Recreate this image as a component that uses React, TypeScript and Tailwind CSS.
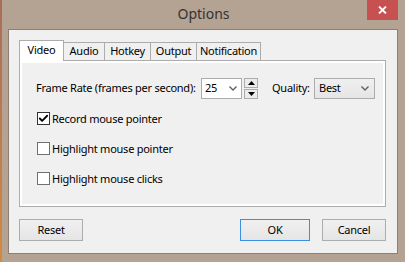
import { Check } from "lucide-react";

function Chevron() {
  return (
    <svg width="8" height="5" viewBox="0 0 8 5" fill="none">
      <path d="M0.5 0.5L4 4L7.5 0.5" stroke="#606060" strokeWidth="1.4" />
    </svg>
  );
}

function CheckRow({ label, checked }: { label: string; checked?: boolean }) {
  return (
    <div className="flex items-center h-[13px] ml-[1px]">
      <div
        className={`w-[13px] h-[13px] border bg-white flex items-center justify-center ${
          checked ? "border-[#333333]" : "border-[#707070]"
        }`}
      >
        {checked && <Check size={11} strokeWidth={4} className="text-black" />}
      </div>
      <span className="ml-[2px] leading-none">{label}</span>
    </div>
  );
}

export default function App() {
  const tabs = [
    { name: "Video", w: "w-[45px]" },
    { name: "Audio", w: "w-[41px]" },
    { name: "Hotkey", w: "w-[46px]" },
    { name: "Output", w: "w-[46px]" },
    { name: "Notification", w: "w-[64px]" },
  ];
  return (
    <div className="w-[405px] h-[262px] bg-[#b4a292] flex overflow-hidden font-['Noto_Sans',sans-serif] text-[11px] tracking-[-0.25px] text-black">
      {/* desktop edge */}
      <div className="w-[2px] h-full bg-gradient-to-b from-[#a86c5c] to-[#d38b3c]" />
      <div className="flex-1 flex flex-col relative">
        {/* title bar */}
        <div className="h-[29px] flex items-center justify-center pb-[2px] text-[14px] tracking-normal text-[#333333]">
          Options
        </div>
        <div className="absolute right-[7px] top-0 w-[31px] h-[20px] bg-[#c75050] flex items-center justify-center">
          <svg width="9" height="8" viewBox="0 0 9 8">
            <path d="M1 0.5L8 7.5M8 0.5L1 7.5" stroke="white" strokeWidth="1.8" />
          </svg>
        </div>

        {/* client area */}
        <div className="ml-[6px] w-[390px] h-[225px] bg-[#f0f0f0] border border-[#8f7f72] flex flex-col">
          {/* tab strip */}
          <div className="flex items-end h-[20px] mt-[10px] ml-[10px]">
            {tabs.map((t, i) =>
              i === 0 ? (
                <div
                  key={t.name}
                  className={`${t.w} h-[21px] -mb-[1px] relative z-10 bg-white border border-b-0 border-[#acacac] flex items-center justify-center pb-[2px]`}
                >
                  {t.name}
                </div>
              ) : (
                <div
                  key={t.name}
                  className={`${t.w} h-[18px] bg-[#f0f0f0] border border-b-0 border-l-0 border-[#acacac] flex items-center justify-center`}
                >
                  {t.name}
                </div>
              )
            )}
          </div>

          {/* tab panel */}
          <div className="ml-[10px] w-[367px] h-[147px] border border-[#adadad] bg-white p-[2px]">
            <div className="w-full h-full bg-[#f0f0f0] pl-[14px] pt-[15px] flex flex-col">
              <div className="flex items-center h-[21px]">
                <span className="w-[165px] whitespace-nowrap">Frame Rate (frames per second):</span>
                <div className="w-[41px] h-[21px] bg-white border border-[#acacac] flex items-center justify-between pl-[3px] pr-[4px]">
                  <span>25</span>
                  <Chevron />
                </div>
                <div className="ml-[2px] w-[14px] h-[21px] flex flex-col gap-[1px]">
                  <div className="h-[10px] border border-[#acacac] bg-[#ececec] flex items-center justify-center">
                    <svg width="7" height="4" viewBox="0 0 7 4">
                      <path d="M0 4L3.5 0L7 4Z" fill="#000" />
                    </svg>
                  </div>
                  <div className="h-[10px] border border-[#acacac] bg-[#ececec] flex items-center justify-center">
                    <svg width="7" height="4" viewBox="0 0 7 4">
                      <path d="M0 0L3.5 4L7 0Z" fill="#000" />
                    </svg>
                  </div>
                </div>
                <span className="ml-[14px] w-[42px] whitespace-nowrap">Quality:</span>
                <div className="w-[61px] h-[21px] bg-gradient-to-b from-[#f0f0f0] to-[#e5e5e5] border border-[#acacac] flex items-center justify-between pl-[4px] pr-[5px]">
                  <span>Best</span>
                  <Chevron />
                </div>
              </div>
              <div className="mt-[13px] flex flex-col gap-[17px]">
                <CheckRow label="Record mouse pointer" checked />
                <CheckRow label="Highlight mouse pointer" />
                <CheckRow label="Highlight mouse clicks" />
              </div>
            </div>
          </div>

          {/* buttons */}
          <div className="flex mt-[12px] ml-[10px] w-[367px] h-[22px]">
            <button className="w-[64px] h-[22px] border border-[#acacac] bg-gradient-to-b from-[#f0f0f0] to-[#e5e5e5]">
              Reset
            </button>
            <div className="flex-1" />
            <button className="w-[70px] h-[22px] border border-[#3c8fe0] bg-gradient-to-b from-[#f0f0f0] to-[#e5e5e5]">
              OK
            </button>
            <button className="ml-[12px] w-[64px] h-[22px] border border-[#acacac] bg-gradient-to-b from-[#f0f0f0] to-[#e5e5e5]">
              Cancel
            </button>
          </div>
        </div>
      </div>
    </div>
  );
}
